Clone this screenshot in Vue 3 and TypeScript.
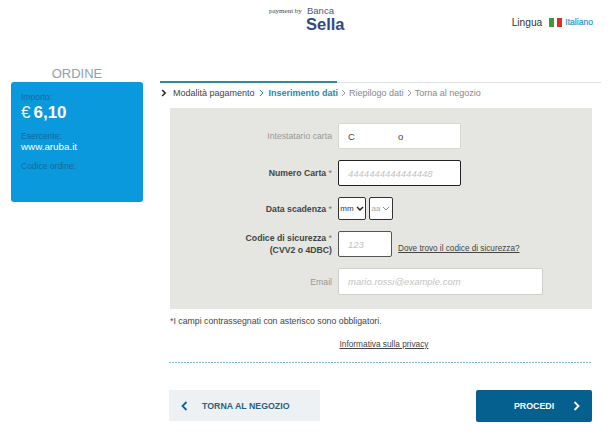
<script setup lang="ts">
const steps = [
  { label: 'Modalità pagamento', cls: 'done' },
  { label: 'Inserimento dati', cls: 'active' },
  { label: 'Riepilogo dati', cls: 'todo' },
  { label: 'Torna al negozio', cls: 'todo' },
]
</script>

<template>
  <div class="page">
    <header class="top">
      <div class="logo">
        <span class="paid">payment by</span>
        <div class="bank">
          <span class="banca">Banca</span>
          <span class="sella">Sella</span>
        </div>
      </div>
      <div class="lang">
        <span class="lingua">Lingua</span>
        <span class="flag"><i class="g"></i><i class="r"></i></span>
        <span class="ital">Italiano</span>
      </div>
    </header>

    <div class="body">
      <aside class="side">
        <h2 class="side-title">ORDINE</h2>
        <div class="card">
          <div class="dim">Importo:</div>
          <div class="amount"><span class="eur">€</span>6,10</div>
          <div class="dim mt1">Esercente:</div>
          <div class="shop">www.aruba.it</div>
          <div class="dim mt2">Codice ordine:</div>
        </div>
      </aside>

      <main class="main">
        <div class="track"><div class="track-fill"></div></div>
        <nav class="steps">
          <span v-for="(s, i) in steps" :key="s.label" class="step">
            <svg v-if="i === 0" class="first" width="6" height="8" viewBox="0 0 6 8"><path d="M1.2 1l3 3-3 3" fill="none" stroke="#222" stroke-width="1.5" /></svg>
            <span :class="s.cls">{{ s.label }}</span>
            <svg v-if="i < 3" :class="i === 0 ? 'sep wide' : 'sep'" width="5" height="8" viewBox="0 0 5 8"><path d="M1 1l3 3-3 3" fill="none" :stroke="i === 0 ? '#2b8aa0' : '#999'" stroke-width="1" /></svg>
          </span>
        </nav>

        <section class="panel">
          <div class="row">
            <label class="lab light">Intestatario carta</label>
            <div class="field w123 plain value"><span>C</span><span class="o">o</span></div>
          </div>
          <div class="row">
            <label class="lab strong">Numero Carta <em>*</em></label>
            <div class="field w123 dark ph">4444444444444448</div>
          </div>
          <div class="row r3">
            <label class="lab strong">Data scadenza <em>*</em></label>
            <div class="selects">
              <div class="sel on">mm<svg width="8" height="6" viewBox="0 0 8 6"><path d="M1 1l3 3 3-3" fill="none" stroke="#222" stroke-width="1.5" /></svg></div>
              <div class="sel off">aa<svg width="8" height="6" viewBox="0 0 8 6"><path d="M1 1l3 3 3-3" fill="none" stroke="#888" stroke-width="1" /></svg></div>
            </div>
          </div>
          <div class="row r4">
            <label class="lab strong two">Codice di sicurezza <em>*</em><br />(CVV2 o 4DBC)</label>
            <div class="field w54 dark2 ph">123</div>
            <a class="where">Dove trovo il codice di sicurezza?</a>
          </div>
          <div class="row r5">
            <label class="lab light">Email</label>
            <div class="field w205 soft ph">mario.rossi@example.com</div>
          </div>
        </section>

        <p class="note">*I campi contrassegnati con asterisco sono obbligatori.</p>
        <a class="privacy">Informativa sulla privacy</a>
        <div class="dash"></div>

        <div class="actions">
          <button class="btn back">
            <svg width="7" height="10" viewBox="0 0 7 10"><path d="M5.5 1L1.5 5l4 4" fill="none" stroke="#0f6491" stroke-width="1.8" /></svg>
            <span>TORNA AL NEGOZIO</span>
          </button>
          <button class="btn next">
            <span>PROCEDI</span>
            <svg width="7" height="10" viewBox="0 0 7 10"><path d="M1.5 1l4 4-4 4" fill="none" stroke="#fff" stroke-width="1.8" /></svg>
          </button>
        </div>
      </main>
    </div>
  </div>
</template>

<style>
html, body { margin: 0; background: #fff; }
</style>

<style scoped>
.page {
  width: 610px;
  height: 435px;
  overflow: hidden;
  font-family: "Liberation Sans", Arial, sans-serif;
  font-size: 9px;
  color: #333;
  box-sizing: border-box;
}
.top {
  height: 66px;
  display: flex;
  justify-content: flex-end;
  position: relative;
}
.logo {
  position: absolute;
  left: 269px;
  top: 6px;
  display: flex;
  align-items: flex-start;
  gap: 5px;
}
.paid {
  width: 32px;
  white-space: nowrap;
  font-family: "Liberation Serif", serif;
  font-size: 7px;
  color: #444;
  margin-top: 1px;
}
.bank { display: flex; flex-direction: column; }
.banca { font-size: 9.5px; line-height: 10px; color: #4a5a86; margin-left: 1px; }
.sella { font-size: 16.5px; line-height: 16px; font-weight: 700; color: #34487f; }
.lang {
  display: flex;
  align-items: center;
  height: 12px;
  margin-top: 16px;
  margin-right: 17px;
}
.lingua { font-size: 10.2px; color: #333; margin-right: 7px; }
.flag { display: flex; gap: 3px; margin-right: 3px; }
.flag i { display: block; width: 5px; height: 9px; }
.flag .g { background: #3f9a3a; }
.flag .r { background: #e0301e; }
.ital { font-size: 8.6px; color: #2b96c8; -webkit-text-stroke: 0.2px #2b96c8; }

.body { display: flex; align-items: flex-start; }
.side { width: 132px; margin-left: 11px; }
.side-title {
  margin: 0;
  height: 16px;
  line-height: 15px;
  font-size: 13px;
  font-weight: 400;
  text-align: center;
  color: #8da2ae;
}
.card {
  height: 120px;
  box-sizing: border-box;
  background: #0b99dd;
  border-radius: 3px;
  padding: 10px 10px;
  color: #fff;
}
.dim { font-size: 8.5px; line-height: 11px; color: #0f6b9e; }
.amount {
  font-size: 17px;
  font-weight: 700;
  line-height: 20px;
}
.eur { font-weight: 400; font-size: 17px; margin-right: 3px; }
.mt1 { margin-top: 8px; }
.mt2 { margin-top: 8px; }
.shop { font-size: 9.8px; line-height: 12px; margin-top: -1px; }

.main { width: 441px; margin-left: 17px; margin-top: 15px; }
.track { height: 2px; background: linear-gradient(#fff 50%, #dfe2e2 50%); }
.track-fill { width: 177px; height: 2px; background: #2b8c9e; }
.steps {
  display: flex;
  align-items: center;
  height: 19px;
  padding-left: 1px;
}
.step { display: flex; align-items: center; white-space: nowrap; }
.first { margin-right: 6px; }
.sep { margin: 0 3px; }
.sep.wide { margin: 0 4.5px; }
.done { color: #444; }
.active { color: #1f8aa6; font-weight: 700; }
.todo { color: #888; }

.panel {
  margin: 6px 9px 0 10px;
  height: 201px;
  box-sizing: border-box;
  background: #e5e6e1;
  padding-top: 15px;
  display: flex;
  flex-direction: column;
}
.row {
  display: flex;
  align-items: center;
  height: 26px;
  margin-bottom: 11px;
}
.r3 { height: 23px; }
.r4 { height: 26px; }
.r5 { height: 27px; margin-bottom: 0; }
.lab {
  width: 162px;
  flex: none;
  margin-right: 6px;
  text-align: right;
  font-size: 8.7px;
  line-height: 12px;
}
.lab em { font-style: normal; font-weight: 400; color: #777; }
.light { color: #999; }
.strong { color: #444; font-weight: 700; }
.field {
  box-sizing: border-box;
  height: 100%;
  background: #fff;
  border-radius: 2px;
  display: flex;
  align-items: center;
  padding-left: 9px;
  font-size: 9.5px;
}
.w123 { width: 123px; }
.w54 { width: 54px; }
.w205 { width: 205px; }
.plain { border: 1px solid #d6d6d2; }
.value { color: #444; gap: 43px; }
.dark { border: 1px solid #222; }
.dark2 { border: 1px solid #555; }
.soft { border: 1px solid #cfcfcb; }
.ph { color: #c4c4c4; font-style: italic; }
.selects { display: flex; gap: 3px; height: 100%; }
.sel {
  box-sizing: border-box;
  height: 100%;
  background: #fff;
  border: 1px solid #333;
  border-radius: 2px;
  display: flex;
  align-items: center;
  justify-content: center;
  gap: 2px;
  font-size: 8px;
}
.sel.on { width: 28px; color: #333; }
.sel.off { width: 24px; color: #aaa; }
.where {
  margin-left: 6px;
  font-size: 8.2px;
  color: #444;
  text-decoration: underline;
  align-self: flex-end;
  margin-bottom: 4px;
}
.note { margin: 7px 0 0 10px; font-size: 8.75px; line-height: 11px; color: #444; }
.privacy {
  display: block;
  text-align: center;
  margin-top: 12px;
  margin-left: 7px;
  font-size: 8.3px;
  line-height: 11px;
  color: #444;
  text-decoration: underline;
}
.dash {
  margin: 12px 9px 0 9px;
  height: 1px;
  background: repeating-linear-gradient(90deg, #7cbcc8 0 2px, #fff 2px 3px);
}
.actions {
  margin: 27px 9px 0 9px;
  display: flex;
  justify-content: space-between;
}
.btn {
  border: 0;
  display: flex;
  align-items: center;
  font-family: inherit;
  font-size: 8.8px;
  font-weight: 700;
  padding: 0;
}
.back {
  width: 151px;
  height: 31px;
  background: #eef1f3;
  color: #2a6080;
  padding-left: 12px;
  gap: 14px;
}
.next {
  width: 116px;
  height: 32px;
  background: #05608f;
  color: #fff;
  border-radius: 2px;
  padding-left: 38px;
  gap: 19px;
}
</style>
